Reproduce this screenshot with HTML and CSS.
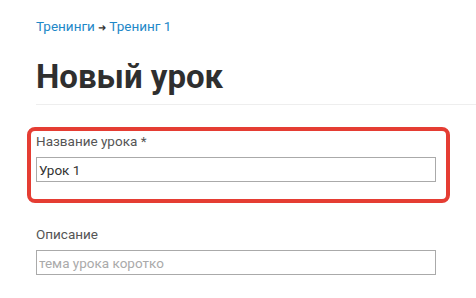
FILE: index.html
```html
<!DOCTYPE html>
<html lang="ru">
<head>
    <meta charset="UTF-8">
    <title>Новый урок</title>
    <link rel="stylesheet" href="styles.css">
</head>
<body>

<div class="page">
    <div class="breadcrumbs">
        <a href="#">Тренинги</a>
        <span class="sep">&#10140;</span>
        <a href="#">Тренинг 1</a>
    </div>

    <h1 class="title">Новый урок</h1>

    <form class="lesson-form">
        <div class="highlight">
            <div class="field">
                <label for="name">Название урока *</label>
                <input type="text" id="name" value="Урок 1">
            </div>
        </div>

        <div class="field">
            <label for="desc">Описание</label>
            <input type="text" id="desc" placeholder="тема урока коротко">
        </div>
    </form>
</div>

</body>
</html>
```

FILE: styles.css
```css
/* Base */
body {
    margin: 0;
    font-family: Roboto, "Open Sans", sans-serif;
    color: #333;
    background: #fff;
}

.page {
    padding: 17px 0 0 36px;
}

/* Breadcrumbs */
.breadcrumbs {
    font-size: 13.5px;
    line-height: 18px;
}

.breadcrumbs a {
    color: #1e88c8;
    text-decoration: none;
}

.breadcrumbs .sep {
    color: #333;
    font-size: 10px;
}

/* Title */
.title {
    margin: 18px 0 0;
    font-size: 33px;
    line-height: 44px;
    font-weight: 700;
    color: #2f2f2f;
    padding-bottom: 5px;
    border-bottom: 1px solid #eee;
}

/* Form */
.lesson-form {
    width: 400px;
    margin-top: 22px;
}

.highlight {
    border: 4px solid #e53d33;
    border-radius: 8px;
    margin: 0 -14px 0 -9px;
    padding: 1px 10px 17px 5px;
}

.field label {
    display: block;
    font-size: 13.5px;
    line-height: 18px;
    color: #555;
    margin-bottom: 7px;
}

.field input {
    display: block;
    box-sizing: border-box;
    width: 400px;
    height: 25px;
    margin: 0;
    padding: 0 2px;
    border: 1px solid #aaa;
    border-radius: 0;
    font-family: inherit;
    font-size: 13.5px;
    color: #333;
}

.field input::placeholder {
    color: #aaa;
}

.lesson-form > .field {
    margin-top: 22px;
}
```
